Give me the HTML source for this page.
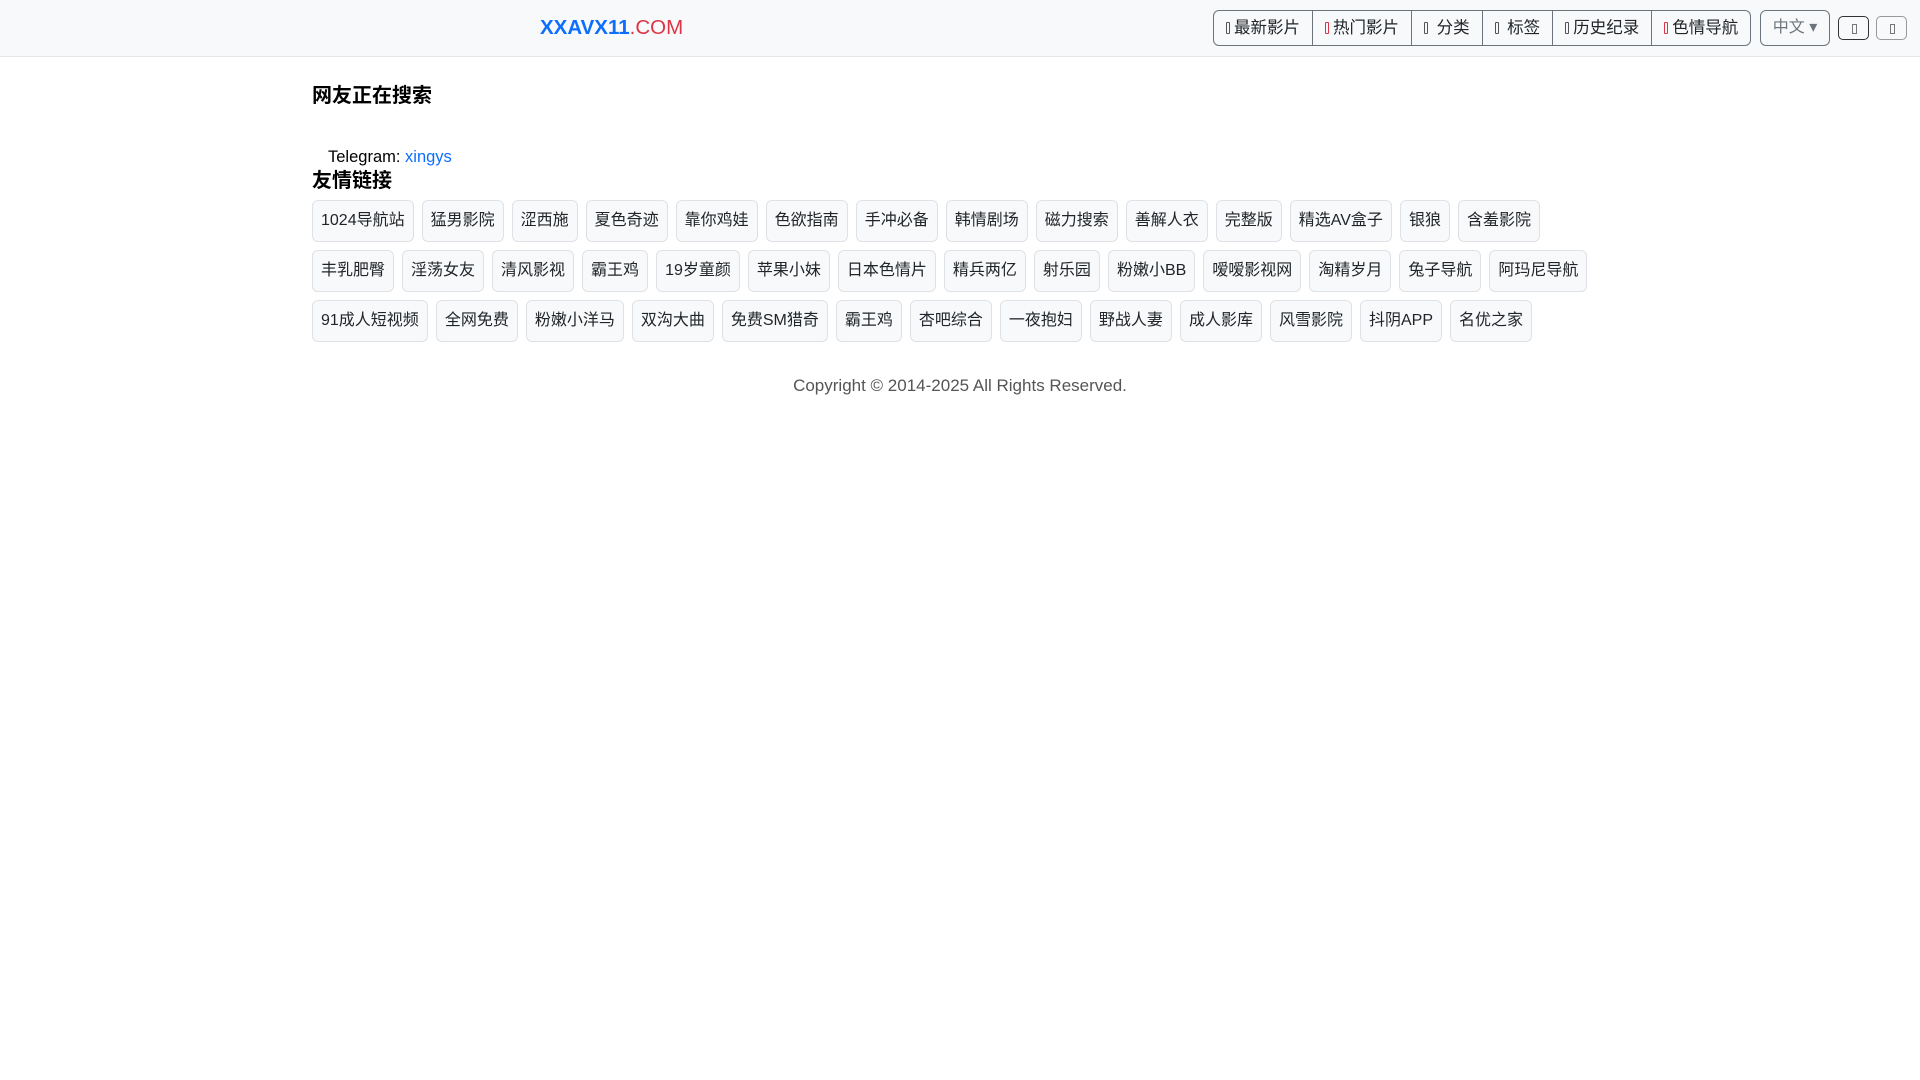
<!DOCTYPE html>
<html><head><meta charset="utf-8"><style>
*{box-sizing:border-box;margin:0;padding:0}
body{width:1920px;height:1080px;background:#fff;font-family:"Liberation Sans","Noto Sans CJK SC",sans-serif;color:#212529;position:relative;overflow:hidden}
.nav{position:absolute;left:0;top:0;width:1920px;height:57px;background:#f8f9fa;border-bottom:1px solid #e5e7ea}
.logo{position:absolute;left:540px;top:14px;font-size:20.5px;line-height:28px}
.logo b{color:#0d6efd}.logo span{color:#dc3545}
.grp{position:absolute;left:1213px;top:10px;height:36px;display:flex;border:1px solid #6c757d;border-radius:6px;overflow:hidden}
.grp div{height:34px;line-height:34px;padding:0 12px;font-size:16.5px;border-left:1px solid #6c757d;color:#212529}
.grp div:first-child{border-left:none}
.ic{display:inline-block;width:4px;height:12px;border:1px solid #555;border-radius:1px;margin-right:4px;vertical-align:-1px}
.r{border-color:#dc3545}
.lang{position:absolute;left:1760px;top:10px;width:70px;height:36px;border:1px solid #6c757d;border-radius:6px;color:#6c757d;font-size:16px;line-height:34px;text-align:center}
.sb{position:absolute;top:16px;width:31px;height:24px;border:1px solid #333;border-radius:5px}
.sb::after{content:"";position:absolute;left:13px;top:7px;width:3px;height:8px;border:1px solid #777}
h3{position:absolute;left:312px;font-size:20px;font-weight:bold;color:#000}
.tg{position:absolute;left:328px;top:148px;font-size:16.5px;color:#000}
.tg a{color:#0d6efd;text-decoration:none}
.tags{position:absolute;left:312px;top:200px;width:1310px;display:flex;flex-wrap:wrap}
.tags span{height:42px;line-height:40px;padding:0 8px;border:1px solid #dee2e6;border-radius:6px;background:#f8f9fa;font-size:16px;margin:0 8px 8px 0;color:#212529}
.cp{position:absolute;left:0;width:1920px;top:376px;text-align:center;font-size:17px;color:#555}
</style></head><body>
<div class="nav">
<div class="logo"><b>XXAVX11</b><span>.COM</span></div>
<div class="grp"><div><i class="ic"></i>最新影片</div><div><i class="ic r"></i>热门影片</div><div><i class="ic"></i> 分类</div><div><i class="ic"></i> 标签</div><div><i class="ic"></i>历史纪录</div><div><i class="ic r"></i>色情导航</div></div>
<div class="lang">中文 ▾</div>
<div class="sb" style="left:1838px"></div>
<div class="sb" style="left:1876px;border-color:#999"></div>
</div>
<h3 style="top:79px">网友正在搜索</h3>
<div class="tg">Telegram: <a>xingys</a></div>
<h3 style="top:164px">友情链接</h3>
<div class="tags">
<span>1024导航站</span><span>猛男影院</span><span>涩西施</span><span>夏色奇迹</span><span>靠你鸡娃</span><span>色欲指南</span><span>手冲必备</span><span>韩情剧场</span><span>磁力搜索</span><span>善解人衣</span><span>完整版</span><span>精选AV盒子</span><span>银狼</span><span>含羞影院</span><span style="margin-right:300px">&nbsp;</span>
</div>
<div class="tags" style="top:250px">
<span>丰乳肥臀</span><span>淫荡女友</span><span>清风影视</span><span>霸王鸡</span><span>19岁童颜</span><span>苹果小妹</span><span>日本色情片</span><span>精兵两亿</span><span>射乐园</span><span>粉嫩小BB</span><span>嗳嗳影视网</span><span>淘精岁月</span><span>兔子导航</span><span>阿玛尼导航</span>
</div>
<div class="tags" style="top:300px">
<span>91成人短视频</span><span>全网免费</span><span>粉嫩小洋马</span><span>双沟大曲</span><span>免费SM猎奇</span><span>霸王鸡</span><span>杏吧综合</span><span>一夜抱妇</span><span>野战人妻</span><span>成人影库</span><span>风雪影院</span><span>抖阴APP</span><span>名优之家</span>
</div>
<div class="cp">Copyright © 2014-2025 All Rights Reserved.</div>
</body></html>
